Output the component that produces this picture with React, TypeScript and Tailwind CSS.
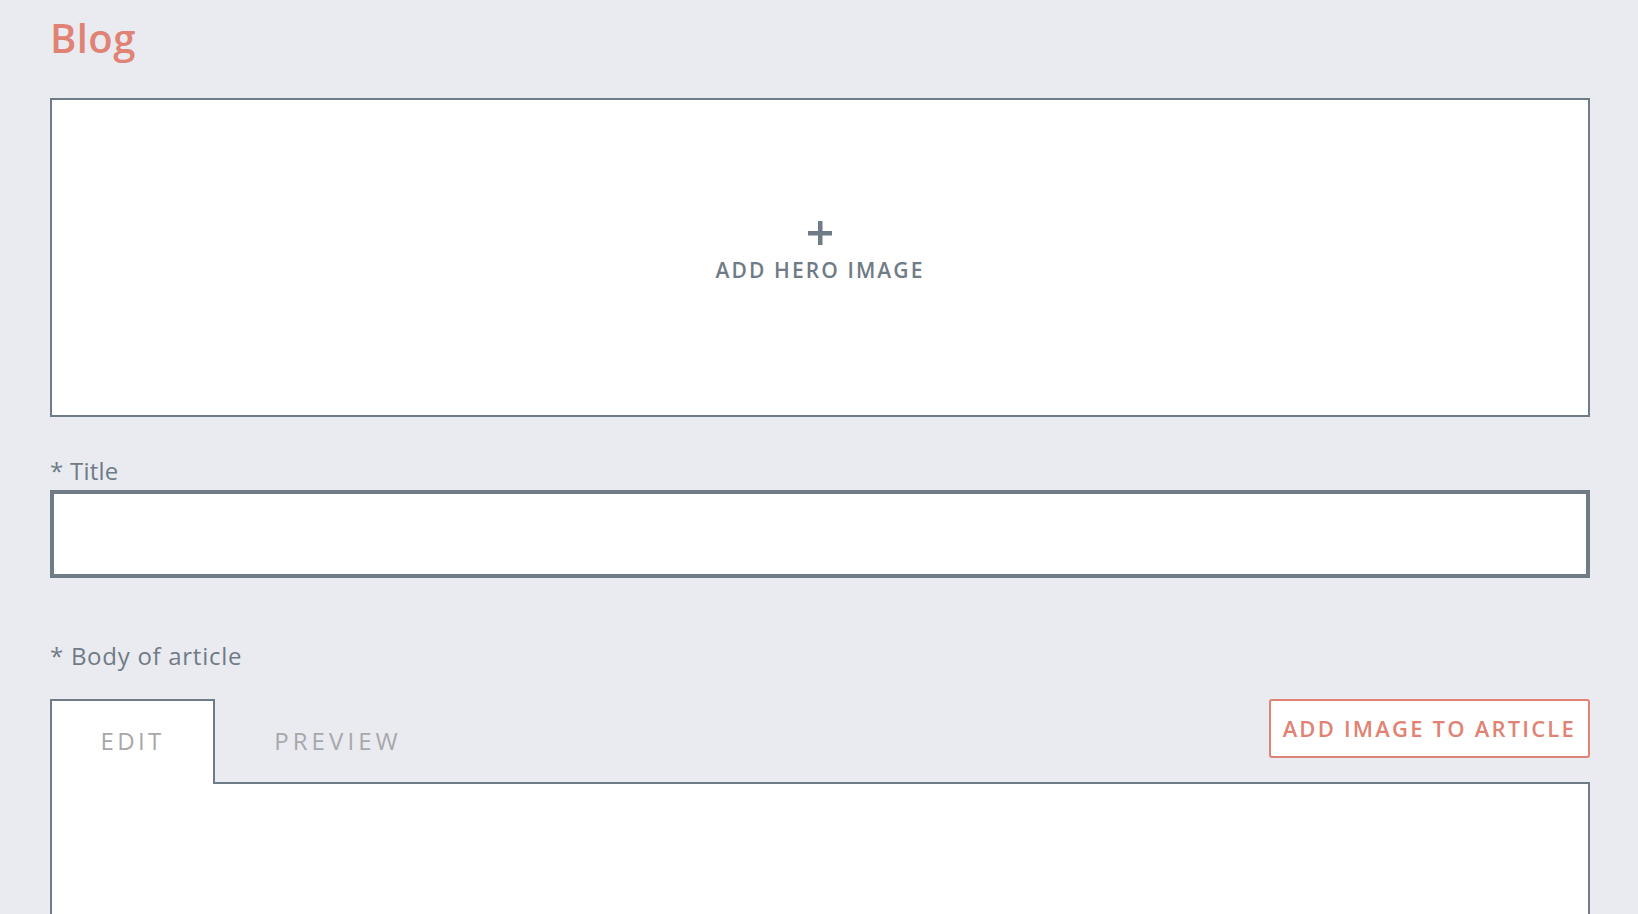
import React from "react"

export default function App() {
  return (
    <main
      className="min-h-screen bg-[#eaebf0] pl-[50px] pr-[48px] pt-[13px] pb-10"
      style={{ fontFamily: '"Open Sans", "Noto Sans", sans-serif' }}
    >
      <h1 className="text-[40px] leading-[50px] font-semibold tracking-[0.01em] text-[#e08374]">Blog</h1>

      {/* hero image */}
      <button className="mt-[35px] w-full h-[319px] bg-white border-2 border-[#6f7b86] flex flex-col items-center justify-center">
        <svg width="26" height="26" viewBox="0 0 26 26" className="-mt-[12px]">
          <rect x="11" y="1" width="4.5" height="24" fill="#6f7b86" />
          <rect x="1" y="11" width="24" height="4.5" fill="#6f7b86" />
        </svg>
        <span className="mt-[10px] text-[21px] leading-[28px] font-semibold tracking-[0.1em] text-[#6f7b86]">
          ADD HERO IMAGE
        </span>
      </button>

      {/* title */}
      <label className="block mt-[38px] text-[24px] leading-[32px] tracking-[0.01em] text-[#6f7b86]">* Title</label>
      <input className="mt-[3px] block w-full h-[88px] bg-white border-4 border-[#6f7b86] outline-none px-4 text-xl" />

      {/* body */}
      <label className="block mt-[62px] text-[24px] leading-[32px] tracking-[0.03em] text-[#6f7b86]">* Body of article</label>
      <div className="mt-[27px] flex items-start justify-between">
        <div className="flex">
          <div className="relative z-10 -mb-[2px] w-[165px] h-[85px] bg-white border-2 border-b-0 border-[#6f7b86] flex justify-center pt-[24px]">
            <span className="text-[24px] leading-[32px] tracking-[0.14em] text-[#a6a8aa]">EDIT</span>
          </div>
          <div className="w-[246px] flex justify-center pt-[26px]">
            <span className="text-[24px] leading-[32px] tracking-[0.17em] text-[#a6a8aa]">PREVIEW</span>
          </div>
        </div>
        <button className="h-[59px] px-[12px] bg-white border-2 border-[#e08374] rounded-[3px] text-[22px] font-semibold tracking-[0.1em] text-[#e08374]">
          ADD IMAGE TO ARTICLE
        </button>
      </div>
      <div className="relative w-full h-[320px] bg-white border-2 border-[#6f7b86]" />
    </main>
  )
}
